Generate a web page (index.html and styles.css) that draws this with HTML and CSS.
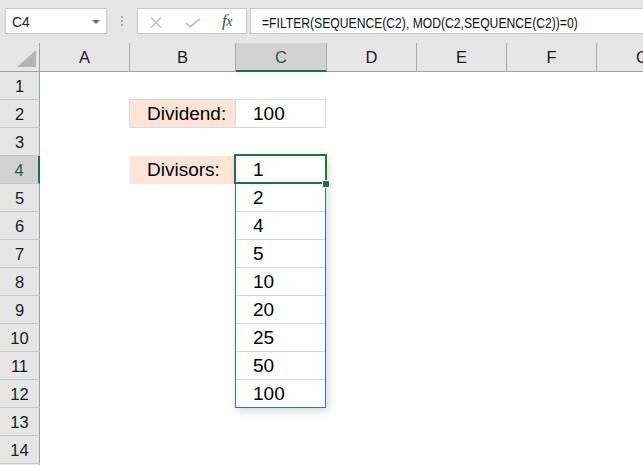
FILE: index.html
```html
<!DOCTYPE html>
<html>
<head>
<meta charset="utf-8">
<link rel="stylesheet" href="styles.css">
</head>
<body>
<div class="topbar">
  <div class="namebox"><span class="nametext">C4</span><i class="caret"></i></div>
  <div class="grip"><i></i><i></i><i></i></div>
  <div class="fbtns">
    <svg class="ico-x" width="12" height="11" viewBox="0 0 12 11"><path d="M1 0.5 L11 10.5 M11 0.5 L1 10.5" stroke="#bdbdbd" stroke-width="1.3" fill="none"/></svg>
    <svg class="ico-ok" width="16" height="10" viewBox="0 0 16 10"><path d="M0.8 4.8 L5.2 8.8 L15 0.8" stroke="#c4c4c4" stroke-width="1.8" fill="none"/></svg>
    <span class="fx">f<span class="fx-x">x</span></span>
  </div>
  <div class="fbar"><span class="ftext">=FILTER(SEQUENCE(C2), MOD(C2,SEQUENCE(C2))=0)</span></div>
</div>

<div class="sheet">
  <div class="corner"><i class="tri"></i></div>
  <div class="ch">A</div>
  <div class="ch">B</div>
  <div class="ch ch-sel">C</div>
  <div class="ch">D</div>
  <div class="ch">E</div>
  <div class="ch">F</div>
  <div class="ch ch-last">G</div>

  <div class="rh">1</div><div></div><div></div><div></div><div></div><div></div><div></div><div></div>

  <div class="rh">2</div><div></div>
  <div class="cell label boxed">Dividend:</div>
  <div class="cell value boxed-r">100</div>
  <div></div><div></div><div></div><div></div>

  <div class="rh">3</div><div></div><div></div><div></div><div></div><div></div><div></div><div></div>

  <div class="rh rh-sel">4</div><div></div>
  <div class="cell label">Divisors:</div>
  <div class="spill">
    <div class="sv sel">1</div>
    <div class="sv">2</div>
    <div class="sv">4</div>
    <div class="sv">5</div>
    <div class="sv">10</div>
    <div class="sv">20</div>
    <div class="sv">25</div>
    <div class="sv">50</div>
    <div class="sv">100</div>
  </div>
  <div></div><div></div><div></div><div></div>

  <div class="rh">5</div><div></div><div></div><div></div><div></div><div></div><div></div>
  <div class="rh">6</div><div></div><div></div><div></div><div></div><div></div><div></div>
  <div class="rh">7</div><div></div><div></div><div></div><div></div><div></div><div></div>
  <div class="rh">8</div><div></div><div></div><div></div><div></div><div></div><div></div>
  <div class="rh">9</div><div></div><div></div><div></div><div></div><div></div><div></div>
  <div class="rh">10</div><div></div><div></div><div></div><div></div><div></div><div></div>
  <div class="rh">11</div><div></div><div></div><div></div><div></div><div></div><div></div>
  <div class="rh">12</div><div></div><div></div><div></div><div></div><div></div><div></div>

  <div class="rh">13</div><div></div><div></div><div></div><div></div><div></div><div></div><div></div>
  <div class="rh">14</div><div></div><div></div><div></div><div></div><div></div><div></div><div></div>
  <div class="rh rh-edge"></div>
</div>
</body>
</html>
```

FILE: styles.css
```css
html, body {
  margin: 0;
  padding: 0;
}
body {
  width: 643px;
  height: 465px;
  overflow: hidden;
  background: #ffffff;
  font-family: "Liberation Sans", Arial, sans-serif;
  color: #000;
}

/* ---------- top bar ---------- */
.topbar {
  height: 43px;
  box-sizing: border-box;
  background: #e6e6e6;
  display: flex;
  align-items: flex-start;
  padding: 8px 0 0 5px;
  overflow: hidden;
}
.namebox {
  width: 102px;
  height: 26px;
  box-sizing: border-box;
  background: #fff;
  border: 1px solid #c6c6c6;
  display: flex;
  align-items: center;
  justify-content: space-between;
  padding: 1px 6px 0 6px;
  flex: 0 0 auto;
}
.nametext {
  font-size: 14px;
  color: #222;
}
.caret {
  width: 0;
  height: 0;
  border-left: 4px solid transparent;
  border-right: 4px solid transparent;
  border-top: 4px solid #707070;
}
.grip {
  margin-left: 14px;
  margin-top: 8px;
  display: flex;
  flex-direction: column;
  gap: 2px;
  flex: 0 0 auto;
}
.grip i {
  display: block;
  width: 2px;
  height: 2px;
  background: #a8a8a8;
}
.fbtns {
  margin-left: 14px;
  width: 110px;
  height: 26px;
  box-sizing: border-box;
  background: #fff;
  border: 1px solid #c6c6c6;
  display: flex;
  align-items: center;
  padding-left: 12px;
  flex: 0 0 auto;
}
.ico-x {
  margin-top: 2px;
}
.ico-ok {
  margin-left: 23px;
  margin-top: 3px;
}
.fx {
  margin-left: 21px;
  font-family: "Liberation Serif", "Times New Roman", serif;
  font-style: italic;
  font-size: 17px;
  color: #4a4a4a;
  letter-spacing: -0.5px;
}
.fx-x {
  font-size: 14px;
}
.fbar {
  margin-left: 3px;
  width: 420px;
  height: 26px;
  box-sizing: border-box;
  background: #fff;
  border: 1px solid #c6c6c6;
  display: flex;
  align-items: center;
  padding: 2px 0 0 11px;
  flex: 0 0 auto;
  overflow: hidden;
}
.ftext {
  display: inline-block;
  font-size: 15px;
  white-space: nowrap;
  color: #111;
  transform: scaleX(0.81);
  transform-origin: left center;
}

/* ---------- sheet ---------- */
.sheet {
  display: grid;
  grid-template-columns: 40px 90px 106px 91px 90px 90px 90px 90px;
  grid-template-rows: 29px;
  grid-auto-rows: 28px;
  width: 643px;
  height: 422px;
  overflow: hidden;
}
.sheet > div {
  box-sizing: border-box;
  min-width: 0;
}
.corner {
  background: #e6e6e6;
  border-right: 1px solid #a0a0a0;
  border-bottom: 1px solid #a0a0a0;
  display: flex;
  align-items: flex-end;
  justify-content: flex-end;
  padding: 0 3px 4px 0;
}
.tri {
  display: block;
  width: 19px;
  height: 17px;
  background: #b4b4b4;
  clip-path: polygon(100% 0, 100% 100%, 0 100%);
}
.ch {
  background: #e6e6e6;
  border-right: 1px solid #ababab;
  border-bottom: 1px solid #a0a0a0;
  display: flex;
  align-items: center;
  justify-content: center;
  font-size: 16.5px;
  color: #1a1a1a;
  padding-top: 1px;
}
.ch-sel {
  background: #d2d2d2;
  border-bottom: 2px solid #217346;
  color: #1e5e44;
  padding-top: 2px;
}
.ch-last {
  border-right: none;
  justify-content: flex-start;
  padding-left: 39px;
}
.rh {
  background: #e6e6e6;
  border-right: 1px solid #a0a0a0;
  border-bottom: 1px solid #c8c8c8;
  display: flex;
  align-items: center;
  justify-content: center;
  font-size: 16.5px;
  color: #1a1a1a;
  padding-top: 1px;
}
.rh-sel {
  background: #d2d2d2;
  border-right: 2px solid #217346;
  color: #1e5e44;
}

.cell {
  display: flex;
  align-items: center;
  padding-left: 17px;
  font-size: 19px;
  white-space: nowrap;
}
.label {
  background: #fce4d6;
}
.boxed {
  border-right: 1px solid #d9d9d9;
  border-bottom: 1px solid #d9d9d9;
  box-shadow: -1px -1px 0 0 #d9d9d9;
}
.boxed-r {
  width: 90px;
  border-right: 1px solid #d9d9d9;
  border-bottom: 1px solid #d9d9d9;
  box-shadow: 0 -1px 0 0 #d9d9d9;
}

/* spill range */
.spill {
  grid-row: span 9;
  align-self: start;
  width: 91px;
  height: 253px;
  margin: -1px 0 0 -1px;
  border: 1px solid #3e6dbf;
  background: #fff;
  box-shadow: 2px 3px 8px rgba(0, 0, 0, 0.16);
  position: relative;
  z-index: 2;
  display: flex;
  flex-direction: column;
}
.sv {
  height: 28px;
  flex: 0 0 auto;
  box-sizing: border-box;
  border-bottom: 1px solid #d6d6d6;
  display: flex;
  align-items: center;
  padding-left: 17px;
  font-size: 19px;
}
.sv:last-child {
  height: 27px;
  border-bottom: none;
}
.sel {
  position: relative;
}
.sel::before {
  content: "";
  position: absolute;
  left: -2px;
  top: -2px;
  width: 93px;
  height: 30px;
  box-sizing: border-box;
  border: 2px solid #217346;
  z-index: 3;
}
.sel::after {
  content: "";
  position: absolute;
  left: 86px;
  top: 24px;
  width: 6px;
  height: 6px;
  background: #217346;
  border: 1px solid #fff;
  z-index: 4;
}
```
